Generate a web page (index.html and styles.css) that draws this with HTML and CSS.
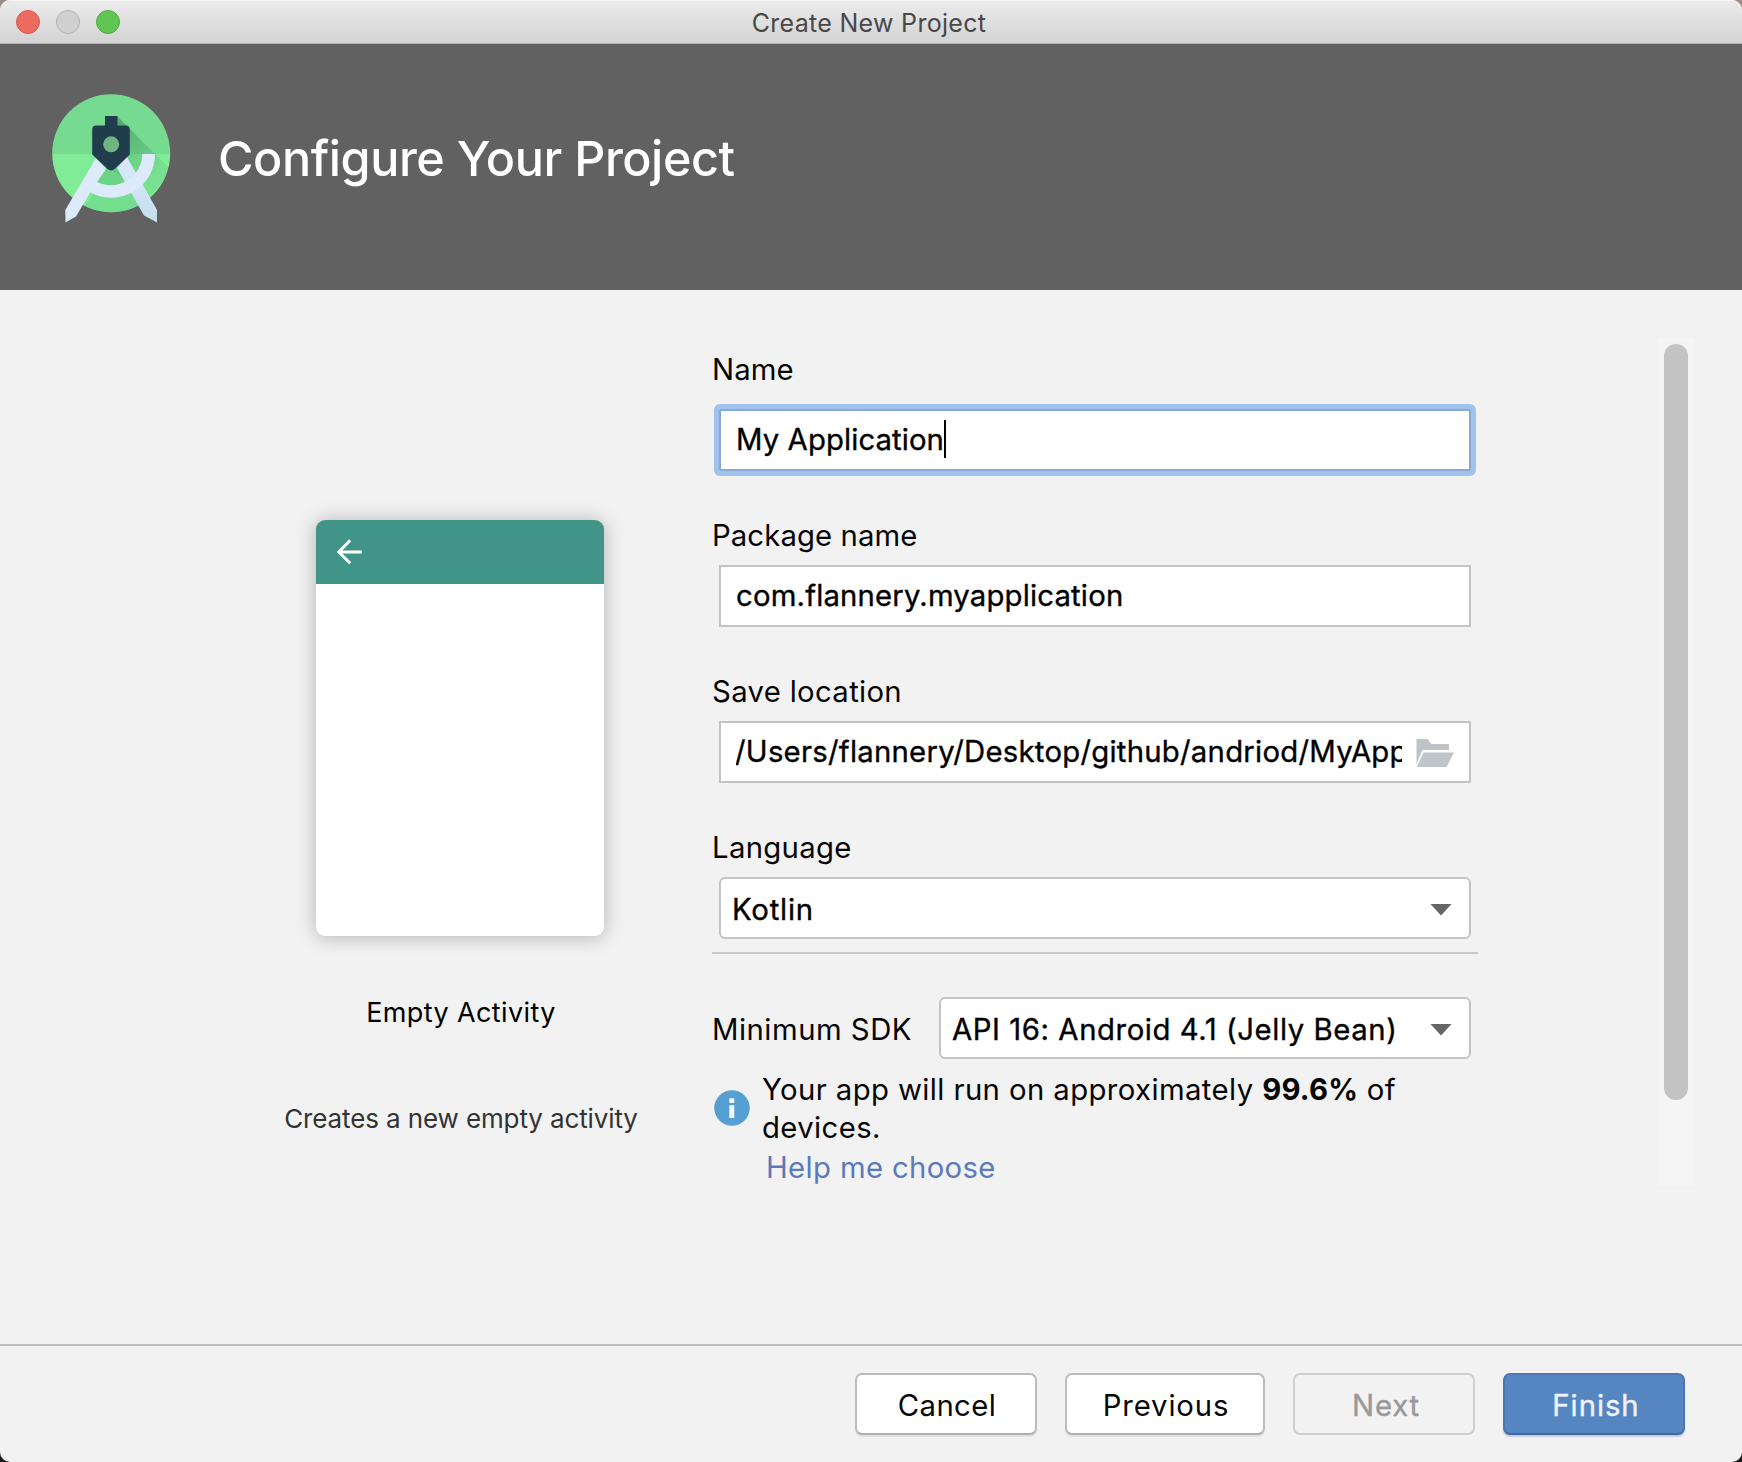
FILE: index.html
```html
<!DOCTYPE html>
<html lang="en">
<head>
<meta charset="utf-8">
<title>Create New Project</title>
<link rel="stylesheet" href="styles.css">
</head>
<body>
<div class="window">
  <header class="titlebar">
    <div class="lights">
      <span class="light light-close"></span>
      <span class="light light-min"></span>
      <span class="light light-zoom"></span>
    </div>
    <span class="titlebar-text">Create New Project</span>
  </header>

  <section class="banner">
    <svg class="logo" viewBox="48 90 126 136" width="126" height="136" aria-hidden="true">
      <defs>
        <clipPath id="disc"><circle cx="111.2" cy="153.3" r="59"/></clipPath>
        <linearGradient id="shade" gradientUnits="userSpaceOnUse" x1="116" y1="128" x2="160" y2="172">
          <stop offset="0" stop-color="#2f7d50" stop-opacity=".5"/>
          <stop offset="1" stop-color="#4fa56c" stop-opacity=".15"/>
        </linearGradient>
        <linearGradient id="leg-right" x1="0" y1="0" x2="0" y2="1">
          <stop offset="0" stop-color="#dbe8f8"/>
          <stop offset="1" stop-color="#c3deee"/>
        </linearGradient>
      </defs>
      <g clip-path="url(#disc)">
        <rect x="52" y="94" width="119" height="60" fill="#76da91"/>
        <rect x="52" y="154" width="119" height="59" fill="#80ec97"/>
        <path d="M117 116 172 171 150 196 111 170Z" fill="url(#shade)"/>
        <path d="M93 194a44 44 0 0 0 44-8l8 14a59 59 0 0 1-62 8Z" fill="#66cf83" opacity=".5"/>
        <path d="M100 168h24l10 13a36 36 0 0 1-38 1Z" fill="#5fc57c" opacity=".6"/>
      </g>
      <path d="M117 168 127 157 157 210V222.500L144 215.500Z" fill="url(#leg-right)"/>
      <path d="M96 158 106 169 97 182A31.500 31.500 0 0 0 142.300 154H155A43.500 43.500 0 0 1 90.300 192.200L76 216.500 65.500 222.500 65.300 210Z" fill="#dceafa"/>
      <path d="M105 116h12.400v9.500h8.400a4 4 0 0 1 4 4V154.500L114.500 169a5 5 0 0 1-7 0L92.200 154.500v-25a4 4 0 0 1 4-4h8.800Z" fill="#203c4d"/>
      <circle cx="111.200" cy="144.300" r="8" fill="#6fb581"/>
    </svg>
    <h1 class="banner-title">Configure Your Project</h1>
  </section>

  <main class="content">
    <aside class="template">
      <div class="phone">
        <div class="phone-bar">
          <svg width="26" height="26" viewBox="0 0 26 26" aria-hidden="true"><path d="M13.200 1.200 1.800 13 13.200 24.300M2 13H25" fill="none" stroke="#fff" stroke-width="3"/></svg>
        </div>
      </div>
      <h2 class="template-name">Empty Activity</h2>
      <p class="template-desc">Creates a new empty activity</p>
    </aside>

    <form class="form">
      <div class="group group-first">
        <div class="label label-name">Name</div>
        <div class="field field-focus"><span class="value value-name">My Application</span><span class="caret"></span></div>
      </div>
      <div class="group">
        <div class="label label-package">Package name</div>
        <div class="field"><span class="value">com.flannery.myapplication</span></div>
      </div>
      <div class="group">
        <div class="label">Save location</div>
        <div class="field">
          <span class="value value-path">/Users/flannery/Desktop/github/andriod/MyApplication</span>
          <svg class="folder" width="38" height="30" viewBox="0 0 38 30" aria-hidden="true"><path d="M.500 1H11.500L15.500 6H33V12H6.500L.500 26Z" fill="#c0c4c8"/><path d="M7.500 14.500H38L30.500 29H.800Z" fill="#bfc5ca"/></svg>
        </div>
      </div>
      <div class="group">
        <div class="label">Language</div>
        <div class="field combo"><span class="value value-kotlin">Kotlin</span><span class="arrow"></span></div>
      </div>
      <div class="rule"></div>
      <div class="sdk">
        <span class="label label-sdk">Minimum SDK</span>
        <div class="field combo combo-sdk"><span class="value value-sdk">API 16: Android 4.1 (Jelly Bean)</span><span class="arrow"></span></div>
      </div>
      <div class="info">
        <svg class="info-icon" width="36" height="36" viewBox="0 0 36 36" aria-hidden="true"><circle cx="18" cy="18" r="17.800" fill="#569fd3"/><path d="M15.300 8.300h5v4.700h-5zM15.300 15.300h5v12.700h-5z" fill="#f2f5f8"/></svg>
        <p class="info-text">Your app will run on approximately <b>99.6%</b> of<br>devices.</p>
      </div>
      <a class="help">Help me choose</a>
    </form>

    <div class="scrollbar"><div class="thumb"></div></div>
  </main>

  <footer class="footer">
    <button class="btn btn-cancel" type="button">Cancel</button>
    <button class="btn btn-previous" type="button">Previous</button>
    <button class="btn btn-next" type="button" disabled>Next</button>
    <button class="btn btn-finish" type="button">Finish</button>
  </footer>
</div>
</body>
</html>
```
FILE: styles.css
```css
* { box-sizing: border-box; }

body {
  margin: 0;
  background: linear-gradient(#a08a88, #1c191b 60%);
  font-family: Inter, "Liberation Sans", sans-serif;
  font-size: 29.3px;
  color: #060606;
}

h1, h2, p { margin: 0; font-weight: 400; }

.window {
  display: flex;
  flex-direction: column;
  height: 1462px;
  border-radius: 10px;
  overflow: hidden;
  background: #f2f2f2;
}

/* Title bar */
.titlebar {
  display: grid;
  grid-template-columns: 1fr auto 1fr;
  align-items: center;
  height: 44px;
  padding: 0 20px 0 16px;
  background: linear-gradient(#ebebeb, #d3d3d3);
  border-top: 1px solid #f6f6f6;
  border-bottom: 1px solid #b3b3b3;
}
.lights { display: flex; gap: 16px; }
.light { width: 24px; height: 24px; border-radius: 50%; border: 1px solid; }
.light-close { background: #ed6a5e; border-color: #d65a50; }
.light-min { background: #d0d0d0; border-color: #b2b2b2; }
.light-zoom { background: #61c554; border-color: #50a845; }
.titlebar-text { padding-top: 2px; font-size: 25px; line-height: 36px; letter-spacing: .3px; color: #484848; }

/* Banner */
.banner {
  display: flex;
  height: 246px;
  padding: 46px 0 0 48px;
  background: #616161;
}
.logo { flex: none; }
.banner-title {
  margin: 38px 0 0 44px;
  font-size: 48.5px;
  font-weight: 500;
  line-height: 62px;
  letter-spacing: -.45px;
  color: #fff;
}

/* Content */
.content { display: flex; flex: 1; align-items: flex-start; }

.template {
  display: flex;
  flex-direction: column;
  align-items: center;
  width: 712px;
  padding: 230px 0 0 208px;
}
.phone {
  width: 288px;
  height: 416px;
  border-radius: 9px;
  overflow: hidden;
  background: #fff;
  box-shadow: 0 1px 20px rgba(0, 0, 0, .27);
}
.phone-bar { display: flex; align-items: center; height: 64px; padding-left: 21px; background: #419488; }
.template-name { margin-top: 59px; padding-left: 2px; font-size: 27px; line-height: 36px; letter-spacing: .38px; color: #000; }
.template-desc { margin-top: 70px; padding-left: 2px; font-size: 26px; line-height: 36px; letter-spacing: -.12px; color: #333; }

.form { width: 766px; padding-top: 62px; }
.group + .group { margin-top: 47px; }
.label { height: 36px; line-height: 36px; letter-spacing: .33px; }
.label-name, .label-package { letter-spacing: .1px; }
.group .field { margin-top: 11px; }
.group-first .field { margin-top: 21px; }

.field {
  display: flex;
  align-items: center;
  height: 62px;
  margin: 0 7px;
  padding-left: 15px;
  border: 2px solid #c3c3c3;
  background: #fff;
}
.field-focus {
  border-color: #8aaad4;
  outline: 5px solid #9fc2ee;
  border-radius: 1px;
}
.value {
  white-space: nowrap;
  line-height: 36px;
  letter-spacing: .18px;
  color: #000;
  -webkit-text-stroke: .35px #000;
}
.value-name { letter-spacing: .1px; }
.caret { width: 2px; height: 38px; margin-top: -2px; background: #000; }
.value-path { width: 666px; overflow: hidden; text-indent: -1px; letter-spacing: .26px; }
.folder { flex: none; margin: 2px 0 0 14px; }

.combo { justify-content: space-between; border-radius: 6px; padding: 3px 17px 0 11px; }
.value-kotlin { letter-spacing: .8px; }
.value-sdk { letter-spacing: .57px; }
.arrow { width: 22px; height: 12px; background: #666; clip-path: polygon(0 0, 100% 0, 50% 100%); }

.rule { height: 2px; margin-top: 13px; background: #c9c9c9; }

.sdk { display: flex; align-items: center; margin-top: 43px; }
.label-sdk { width: 227px; margin-top: 3px; letter-spacing: .5px; }
.combo-sdk { flex: 1; margin-left: 0; }

.info { display: flex; margin-top: 12px; }
.info-icon { margin: 19px 12px 0 2px; }
.info-text { line-height: 38px; letter-spacing: .4px; white-space: nowrap; }
.info-text b { font-weight: 700; letter-spacing: .2px; }
.help { display: block; margin: 3px 0 0 54px; line-height: 36px; letter-spacing: .35px; color: #5a7abb; }

.scrollbar { width: 36px; height: 848px; margin: 48px 0 0 180px; padding: 6px; background: #f5f5f5; }
.thumb { height: 756px; border-radius: 12px; background: #c3c3c3; }

/* Footer */
.footer {
  display: flex;
  justify-content: flex-end;
  gap: 28px;
  height: 118px;
  padding: 27px 57px 0 0;
  border-top: 2px solid #bebebe;
}
.btn {
  width: 182px;
  height: 62px;
  padding: 2px 0 0 2px;
  border: 2px solid #bcbcbc;
  border-bottom-color: #b0b0b0;
  border-radius: 7px;
  background: #fff;
  box-shadow: 0 2px 1px rgba(0, 0, 0, .07);
  font: inherit;
  letter-spacing: .4px;
  color: #060606;
}
.btn-previous { width: 200px; letter-spacing: .85px; }
.btn-next { padding-left: 4px; border-color: #cecece; background: #f2f2f2; box-shadow: none; letter-spacing: .8px; color: #999; -webkit-text-stroke: .4px #999; }
.btn-finish {
  padding-left: 4px;
  border-color: #4a77b3 #4a77b3 #4169a4;
  background: #5586c2;
  box-shadow: 0 2px 1px rgba(60, 90, 150, .25);
  letter-spacing: .95px;
  color: #eef3fa;
  -webkit-text-stroke: .4px #eef3fa;
}
```
